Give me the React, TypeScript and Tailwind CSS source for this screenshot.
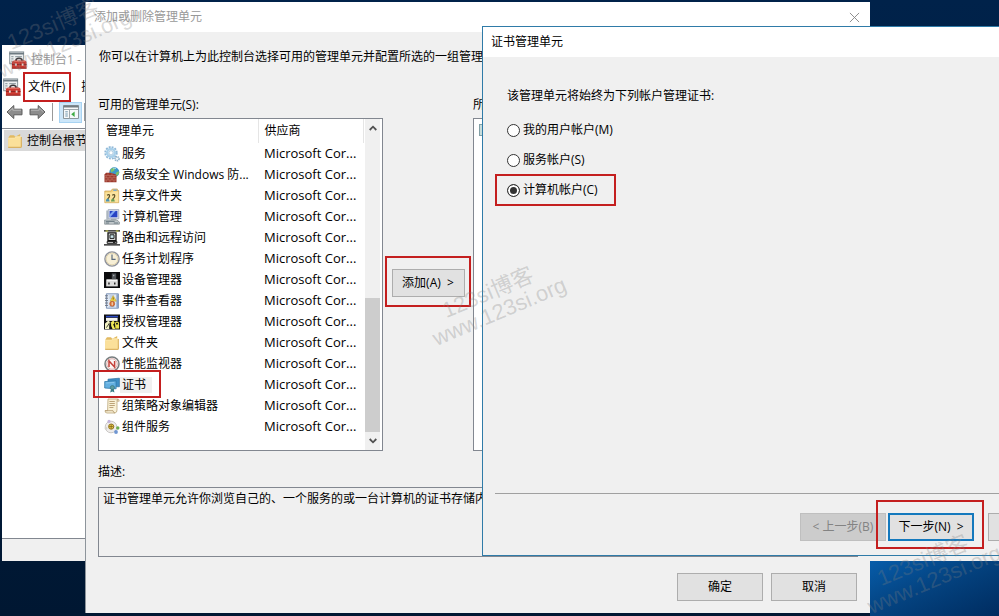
import type { ReactNode } from 'react';

function Icon({ children, className = 'size-4' }: { children: ReactNode; className?: string }) {
  return (
    <svg viewBox="0 0 16 16" className={`${className} shrink-0`} aria-hidden="true">
      {children}
    </svg>
  );
}

const FolderIcon = () => (
  <Icon>
    <path d="M1.5 4.2 3 2.2h4l1.2 1.5L13.2 1v3l1.5 8.5-1 2H1.5z" fill="#e2ba62" />
    <path d="M1.2 5.2h6.2l1.6-1.4h5.2v10.4h-13z" fill="#fbe09a" />
    <path d="M1.2 5.2h6.2l1.6-1.4h5.2" fill="none" stroke="#fff0bd" strokeWidth=".8" />
    <path d="M14.3 4v10.3H1.2" fill="none" stroke="#d8ac55" />
  </Icon>
);

const ConsoleIcon = () => (
  <Icon className="size-[18px]">
    <rect x=".6" y=".8" width="12.4" height="10.5" fill="#edf0f1" stroke="#8b979d" strokeWidth=".9" />
    <path d="M.3 2.3h13" stroke="#6d7a81" strokeWidth="1.6" />
    <path d="M2 5h2M5.5 5h6M2 7h2M2 9h1" stroke="#98a3a8" strokeWidth=".9" />
    <path d="M6.3 9V7.4q2.6-2 5.2 0V9" fill="none" stroke="#3a3436" strokeWidth="1.3" />
    <path d="M2.6 9.6 4.4 8.4h9.8l1.4 1.2v5.9h-13z" fill="#cb3a31" />
    <path d="M3.5 9.8 4.8 9h9l.8.8z" fill="#e67a6c" />
    <path d="M2.6 12h13M2.6 15.3h13" stroke="#8c2420" strokeWidth=".8" />
    <path d="M5.3 11.2h1.6V13H5.3zM11.3 11.2h1.6V13h-1.6z" fill="#e7d9d4" />
  </Icon>
);

const ServicesIcon = () => (
  <Icon>
    <circle cx="7" cy="6.8" r="5.7" fill="none" stroke="#8fb8d8" strokeWidth="2" strokeDasharray="1.9 1.08" />
    <circle cx="7" cy="6.8" r="3.9" fill="#eef6fb" stroke="#a9d0ea" strokeWidth="2.4" />
    <circle cx="7" cy="6.8" r="2.1" fill="#fff" stroke="#8fb6d2" strokeWidth=".7" />
    <circle cx="13" cy="12.7" r="2" fill="#f3f8fb" stroke="#92b4cc" strokeWidth="1.8" strokeDasharray="1.3 .5" />
  </Icon>
);

const FirewallIcon = () => (
  <Icon>
    <circle cx="10.3" cy="5.2" r="5" fill="#3b97cc" />
    <path d="M6.5 2.5Q9 .3 11 1l-.6 2.6-3.2 1.8zM11.5 6l3.3-2 .2 2.5-2.2 2.7z" fill="#7cc26a" />
    <path d="M9 2q1.6-1 3-.5" fill="none" stroke="#bfe3f2" strokeWidth=".8" />
    <path d="M.5 7.4 2 5.8h4.5l5 1.4 1 1.4v6.6H.5z" fill="#9c382d" />
    <path d="M.5 8.6h12M.5 10.8h12M.5 13h12" stroke="#cf8a7b" strokeWidth=".5" />
    <path d="M4 6.4v2.2M8 6.4v2.2M2.2 8.6v2.2M6 8.6v2.2M10 8.6v2.2M4 10.8V13M8 10.8V13M2.2 13v2M6 13v2M10 13v2" stroke="#cf8a7b" strokeWidth=".5" />
  </Icon>
);

const SharedIcon = () => (
  <Icon>
    <path d="M.8 3h6l1.6-2h5v1.5h1.3v12.2H.8z" fill="#f1cf78" stroke="#c89f50" strokeWidth=".7" />
    <path d="M1.3 4.6h6.2L9 3.4h5.2v10.8H1.3z" fill="#fbe39f" />
    <path d="M9.3 2.2h3.4" stroke="#6fa6d6" strokeWidth="1.4" />
    <path d="M3 7.2q2.4-1.4 2.6.6 0 1.2-2 3.4M8.2 7.2q2.4-1.4 2.6.6 0 1.2-2 3.4" fill="none" stroke="#5d5228" strokeWidth="1.2" />
    <path d="M1.8 13.6q.2-3.2 1.9-3.2 1.5 0 1.9 3.2z" fill="#4a93b4" />
    <path d="M7 13.6q.2-3.2 1.9-3.2 1.5 0 1.9 3.2z" fill="#6b9f57" />
  </Icon>
);

const ComputerIcon = () => (
  <Icon>
    <path d="M2.2 1.5h2v9h-2z" fill="#b6bec6" />
    <path d="M4.2.6h10.6v9.2H4.2z" fill="#dfe4ee" stroke="#8e98ad" strokeWidth=".7" />
    <path d="M5.6 1.9h7.8v6.4H5.6z" fill="#2743c4" />
    <path d="M5.6 5.6 9 1.9h2.6L6.2 8.3h-.6z" fill="#7fa6f2" />
    <path d="M.6 11h12.2l2.6 2v2.2H.6z" fill="#c2c9cc" stroke="#7d878d" strokeWidth=".7" />
    <path d="M1.8 12.4h8.8M1.8 14h3.4M9.8 14h4.4" stroke="#5f7079" strokeWidth=".9" />
    <path d="M7 9.8h5V11H7z" fill="#9ca7b0" />
  </Icon>
);

const RoutingIcon = () => (
  <Icon>
    <path d="M0 .9h16M0 14.9h16" stroke="#111" strokeWidth="1.3" />
    <path d="M1.6 1h2.6M11.8 1h2.6" stroke="#cfd23c" strokeWidth="1.2" />
    <path d="M4 2.8h8v7.8H4z" fill="#d4d6d5" stroke="#111" strokeWidth="1.3" />
    <path d="M6 4.8h4v3.6H6z" fill="#c6e4ea" stroke="#222" />
    <path d="M3.2 11.4h9.6v1.9H3.2z" fill="#dcdcdc" stroke="#151515" />
    <path d="M9 12.4h2.4" stroke="#151515" />
  </Icon>
);

const ClockIcon = () => (
  <Icon>
    <circle cx="8" cy="8" r="7.1" fill="#f7efd6" stroke="#8f929b" strokeWidth="1.4" />
    <circle cx="8" cy="8" r="5.8" fill="none" stroke="#ddcfa8" strokeWidth=".8" />
    <path d="M8 3.4v5h3.6" fill="none" stroke="#5b6b7c" strokeWidth="1.2" />
  </Icon>
);

const DeviceIcon = () => (
  <Icon>
    <path d="M0 0h16v16H0z" fill="#0b0b0d" />
    <path d="M2.2 7.4h11.6v7H2.2z" fill="#dcdcdc" />
    <path d="M7.8 1.4h4.4v6H7.8z" fill="#4e5256" />
    <path d="M9 2.8h1.4v1.4H9z" fill="#a2a6aa" />
    <path d="M4.2 10.4h1.5v2H4.2zM10 10.4h1.5v2H10z" fill="#2c2c2c" />
    <path d="M3 8.2h10" stroke="#fff" />
  </Icon>
);

const EventIcon = () => (
  <Icon>
    <path d="M2.4.8h12v14.4h-12z" fill="#dfe8f4" stroke="#7089b0" strokeWidth=".9" />
    <path d="M12.4 1.2h1.7v13.6h-1.7z" fill="#89a2c8" />
    <path d="M1 2.8h3M1 5.2h3M1 7.6h3M1 10h3M1 12.4h3" stroke="#6d7480" />
    <path d="M5.4 3h4M5.4 5h2M5.4 13.4h5" stroke="#9fb3cd" strokeWidth=".9" />
    <path d="m9.2 2.6 3.2 5.6H6z" fill="#f3d548" stroke="#b5942b" strokeWidth=".5" />
    <path d="M9.2 4.4v2.2" stroke="#594a10" strokeWidth=".8" />
    <circle cx="8.2" cy="10.8" r="2.5" fill="#dc7b3a" stroke="#b3461f" strokeWidth=".6" />
    <path d="M8.2 9.2v3.2" stroke="#fff" strokeWidth=".8" />
  </Icon>
);

const AuthorizationIcon = () => (
  <Icon>
    <path d="M0 .5h16v15H0z" fill="#0e0e10" />
    <path d="M2 1.8h12v1.6H2z" fill="#2b49c2" />
    <path d="M2 3.9h11.6v3H2z" fill="#f4f4ee" />
    <path d="M1 15V9.6l3.4-3 2.2 2.2-1.4 2v4.2z" fill="#f3f2c4" />
    <path d="m7 8.2 2.4-1.6 1.3 2.2-1.5 1.7 2 4.5H8.6l-1.4-3z" fill="#efe95a" />
    <path d="m2.4 13.6 3.4-5" stroke="#1d1d12" strokeWidth=".8" />
    <circle cx="13" cy="9.8" r="1.6" fill="none" stroke="#e4dd47" strokeWidth="1.2" />
    <path d="M11.3 10.8h3.8v3.8h-3.8z" fill="#e9e14a" />
  </Icon>
);

const PerformanceIcon = () => (
  <Icon>
    <circle cx="8" cy="8" r="7" fill="#fff" stroke="#777d7e" strokeWidth="1.5" />
    <circle cx="8" cy="8" r="5.3" fill="#fbf6f4" stroke="#c98d88" strokeWidth=".7" />
    <path d="M5 11V5l5.6 6V5" fill="none" stroke="#c4423b" strokeWidth="1.5" />
  </Icon>
);

const CertificateIcon = () => (
  <Icon>
    <path d="m4 2.2 11.4-1v8.6L4 9.4z" fill="#3f8fc6" stroke="#2b6f9f" strokeWidth=".7" />
    <path d="m.7 4.6 11.4-.8v8L.7 11z" fill="#63afe0" stroke="#2f78a8" strokeWidth=".8" />
    <path d="m2.2 6 8-.5" stroke="#8fcaee" strokeWidth=".9" />
    <circle cx="8.4" cy="10.6" r="2.1" fill="#5b9ba0" stroke="#2f7078" strokeWidth=".6" />
    <path d="m7 12-.8 3.6 2.2-1.2 2 1.2L9.8 12z" fill="#3a7f86" />
  </Icon>
);

const PolicyIcon = () => (
  <Icon>
    <path d="M4 1h9.4q1.8 0 1.8 2.2H13v8.8q0 2.6-2 3H3q-2 0-2-2.3h2.6z" fill="#f9f1d6" stroke="#baa478" strokeWidth=".8" />
    <path d="M1 12.7h8q.3 2 2 2.3M13 3q0-1.8 1.2-1.8" fill="none" stroke="#b0956a" strokeWidth=".8" />
    <path d="M5.4 3.5h5.4M5.4 5.5h5.4M5.4 7.5h5.4M5.4 9.5h4" stroke="#b59b6e" strokeWidth=".9" />
  </Icon>
);

const ComponentIcon = () => (
  <Icon>
    <circle cx="7" cy="8" r="5.8" fill="#eeecea" stroke="#c6c4c2" strokeWidth=".9" />
    <circle cx="7.2" cy="7.6" r="2.6" fill="#f0cf45" stroke="#8f7325" />
    <path d="M7.2 5.4v4.4M5 7.6h4.4" stroke="#7d6420" strokeWidth=".8" />
    <circle cx="5" cy="2.4" r="1.6" fill="#c3b3dc" />
    <circle cx="2" cy="9.4" r="1.3" fill="#d6d3cc" />
    <circle cx="13.8" cy="9" r="1.7" fill="#6cae4e" />
    <circle cx="12" cy="13" r="1.9" fill="#6f96d2" />
  </Icon>
);

const snapIns: { name: string; icon: () => ReactNode; selected?: boolean }[] = [
  { name: '服务', icon: ServicesIcon },
  { name: '高级安全 Windows 防...', icon: FirewallIcon },
  { name: '共享文件夹', icon: SharedIcon },
  { name: '计算机管理', icon: ComputerIcon },
  { name: '路由和远程访问', icon: RoutingIcon },
  { name: '任务计划程序', icon: ClockIcon },
  { name: '设备管理器', icon: DeviceIcon },
  { name: '事件查看器', icon: EventIcon },
  { name: '授权管理器', icon: AuthorizationIcon },
  { name: '文件夹', icon: FolderIcon },
  { name: '性能监视器', icon: PerformanceIcon },
  { name: '证书', icon: CertificateIcon, selected: true },
  { name: '组策略对象编辑器', icon: PolicyIcon },
  { name: '组件服务', icon: ComponentIcon },
];

function Arrow({ flip = false }: { flip?: boolean }) {
  return (
    <Icon className={flip ? 'h-4 w-[17px] -scale-x-100' : 'h-4 w-[17px]'}>
      <path d="M.5 8 7.3 1.5v3.7h8.2v5.6H7.3v3.7z" fill="#8d8d8d" stroke="#5d5d5d" />
      <path d="M2 8 6.3 4v2.2h8.2" fill="none" stroke="#b9b9b9" />
    </Icon>
  );
}

function ConsoleWindow() {
  return (
    <section aria-label="控制台1" className="absolute top-[45px] -right-10 left-[2px] flex h-[516px] flex-col bg-white">
      <header className="flex h-7 shrink-0 items-center gap-1 pt-px pl-[7px] text-[#999]">
        <ConsoleIcon />
        <span>控制台1 -</span>
      </header>
      <nav className="flex h-7 shrink-0 items-center pl-px">
        <ConsoleIcon />
        <button type="button" className="ml-[7px]">文件(F)</button>
        <button type="button" className="ml-4">操作(A)</button>
      </nav>
      <div className="flex h-[22px] shrink-0 items-center gap-[6px] pl-1">
        <button type="button" aria-label="后退"><Arrow /></button>
        <button type="button" aria-label="前进"><Arrow flip /></button>
        <span className="h-[18px] w-px bg-[#999]" />
        <div className="flex items-center gap-[2px]">
          <button type="button" aria-label="显示控制台树" className="flex h-[21px] w-[23px] items-center justify-center border border-[#a8d3f2] bg-[#cce6f9]">
            <Icon>
              <path d="M.5 1.5h15v13H.5z" fill="#f7f9fa" stroke="#8b969c" />
              <path d="M.5 2.5h15" stroke="#727c82" strokeWidth="2" />
              <path d="M1 5.5h14M6.5 6v8.5" stroke="#a0a8ac" />
              <path d="M2.3 7.8h2.5M2.3 10h2.5M2.3 12h2.5" stroke="#6f97ae" />
              <path d="m8.2 10.3 3.4-2.8V13z" fill="#3eab43" />
            </Icon>
          </button>
          <span className="h-[18px] w-px bg-[#999]" />
        </div>
      </div>
      <div className="mt-[5px] min-h-0 grow border-y border-[#828790] bg-white px-[2px] pt-px">
        <div className="flex h-[21px] items-center gap-1 bg-[#d9d9d9] pl-[3px]">
          <FolderIcon />
          <span>控制台根节点</span>
        </div>
      </div>
      <footer className="h-[22px] shrink-0 bg-[#f0f0f0]" />
    </section>
  );
}

function SnapInList() {
  return (
    <div className="flex h-[333px] w-[285px] shrink-0 border border-[#828790] bg-white">
      <table className="w-[265px] table-fixed border-collapse self-start text-left">
        <thead>
          <tr className="h-6">
            <th className="w-[159px] border-r border-[#e5e5e5] p-0 pl-[7px] font-normal">管理单元</th>
            <th className="border-r border-[#e5e5e5] p-0 pl-[6px] font-normal">供应商</th>
          </tr>
        </thead>
        <tbody>
          {snapIns.map(({ name, icon: Glyph, selected }) => (
            <tr key={name} className="h-[21px]">
              <td className="p-0 pl-[5px]">
                <div className="flex items-center whitespace-nowrap">
                  <Glyph />
                  <span className={selected ? 'bg-[#f0f0f0] pr-[6px] pl-[2px]' : 'pl-[2px]'}>{name}</span>
                </div>
              </td>
              <td className="p-0 pl-[6px] text-[13px] whitespace-nowrap">Microsoft Cor...</td>
            </tr>
          ))}
        </tbody>
      </table>
      <div className="ml-px flex w-[15px] flex-col bg-[#f0f0f0]">
        <button type="button" aria-label="向上滚动" className="flex h-[18px] items-center justify-center">
          <svg viewBox="0 0 8 6" className="h-[6px] w-2"><path d="m.7 5 3.3-3.3L7.3 5" fill="none" stroke="#505050" strokeWidth="1.8" /></svg>
        </button>
        <div className="grow" />
        <div className="h-[134px] bg-[#cdcdcd]" />
        <button type="button" aria-label="向下滚动" className="flex h-[18px] items-center justify-center">
          <svg viewBox="0 0 8 6" className="h-[6px] w-2"><path d="M.7 1 4 4.3 7.3 1" fill="none" stroke="#505050" strokeWidth="1.8" /></svg>
        </button>
      </div>
    </div>
  );
}

function SnapInDialog() {
  return (
    <section aria-label="添加或删除管理单元" className="absolute top-[2px] left-[85px] w-[785px] border-l border-[#8d949b] bg-[#f0f0f0]">
      <header className="flex h-[30px] items-center justify-between bg-white pr-[10px] pl-2 text-[#999]">
        <span>添加或删除管理单元</span>
        <button type="button" aria-label="关闭">
          <svg viewBox="0 0 12 12" className="size-[11px]"><path d="m1 1 10 10M11 1 1 11" stroke="#858585" /></svg>
        </button>
      </header>
      <div className="flex flex-col px-3 pt-[15px] pb-3">
        <p className="pl-px leading-5 whitespace-nowrap">
          你可以在计算机上为此控制台选择可用的管理单元并配置所选的一组管理单元。
        </p>
        <div className="mt-[30px] flex">
          <div className="flex shrink-0 flex-col">
            <span className="h-[21px] leading-4">可用的管理单元(S):</span>
            <SnapInList />
          </div>
          <div className="flex w-[90px] shrink-0 justify-center pt-[172px]">
            <button type="button" className="h-7 w-[73px] border border-[#adadad] bg-[#e1e1e1]">添加(A) &nbsp;&gt;</button>
          </div>
          <div className="flex grow flex-col">
            <span className="h-[21px] leading-4">所选管理单元(E):</span>
            <div className="h-[333px] border border-[#828790] bg-white p-[5px]">
              <div className="h-3 w-4 border border-[#819fa5] bg-[#c7dcdb]" />
            </div>
          </div>
        </div>
        <span className="mt-[13px] leading-4">描述:</span>
        <div className="mt-[7px] h-[70px] border border-[#828790] px-1 pt-[3px] leading-4 whitespace-nowrap">
          证书管理单元允许你浏览自己的、一个服务的或一台计算机的证书存储内容。
        </div>
        <div className="mt-4 flex justify-end gap-2 pr-px">
          <button type="button" className="h-7 w-[86px] border border-[#adadad] bg-[#e1e1e1]">确定</button>
          <button type="button" className="h-7 w-[86px] border border-[#adadad] bg-[#e1e1e1]">取消</button>
        </div>
      </div>
    </section>
  );
}

const accounts = ['我的用户帐户(M)', '服务帐户(S)', '计算机帐户(C)'];

function CertificateDialog() {
  return (
    <section aria-label="证书管理单元" className="absolute top-[26px] -right-[86px] left-[482px] flex h-[530px] flex-col border border-[#2f7ba8] bg-[#f0f0f0]">
      <header className="flex h-[30px] shrink-0 items-center bg-white pl-2">证书管理单元</header>
      <fieldset className="flex grow flex-col pt-[29px] pl-6">
        <legend className="sr-only">帐户</legend>
        <p className="leading-5">该管理单元将始终为下列帐户管理证书:</p>
        <div className="mt-[9px] flex flex-col">
          {accounts.map((label, i) => (
            <label key={label} className="flex h-[30px] items-center gap-[3px]">
              <input
                type="radio"
                name="account"
                defaultChecked={i === 2}
                className="size-[13px] appearance-none rounded-full border border-[#333] bg-white checked:bg-[#333] checked:shadow-[inset_0_0_0_2px_white]"
              />
              {label}
            </label>
          ))}
        </div>
      </fieldset>
      <footer className="ml-3 flex h-[62px] shrink-0 items-start justify-end border-t border-[#a0a0a0] pt-[19px] pr-[10px]">
        <button type="button" disabled className="h-7 w-[86px] border border-[#bfbfbf] bg-[#ccc] text-[#838383]">&lt; 上一步(B)</button>
        <button type="button" className="ml-[2px] h-7 w-[86px] border-2 border-[#1479bd] bg-[#e1e1e1]">下一步(N) &nbsp;&gt;</button>
        <button type="button" className="ml-[14px] h-7 w-[86px] border border-[#adadad] bg-[#e1e1e1]">取消</button>
      </footer>
    </section>
  );
}

function Watermark({ className }: { className: string }) {
  return (
    <div className={`pointer-events-none absolute origin-bottom-left -rotate-[23deg] font-['Liberation_Sans','Noto_Sans_CJK_SC',sans-serif] text-[22px] leading-[22px] whitespace-nowrap text-[#808080]/30 ${className}`}>
      <div className="pl-5">123si博客</div>
      <div>www.123si.org</div>
    </div>
  );
}

export default function App() {
  return (
    <main className="relative h-screen min-h-[616px] w-full overflow-hidden bg-linear-to-b from-[#00224a] to-[#001732] font-['Open_Sans','Noto_Sans_CJK_SC',sans-serif] text-xs text-black">
      <div className="absolute top-[556px] right-0 bottom-0 left-[870px] bg-linear-to-br from-[#075fae] via-[#04427f] to-[#002c60]" />
      <ConsoleWindow />
      <SnapInDialog />
      <CertificateDialog />
      <div className="pointer-events-none absolute top-[72px] left-[23px] h-[30px] w-12 border-2 border-[#c41f1f]" />
      <div className="pointer-events-none absolute top-[370px] left-[93px] h-7 w-[68px] border-2 border-[#c41f1f]" />
      <div className="pointer-events-none absolute top-[256px] left-[385px] h-[51px] w-[86px] border-2 border-[#c41f1f]" />
      <div className="pointer-events-none absolute top-[174px] left-[495px] h-8 w-[121px] border-2 border-[#c41f1f]" />
      <div className="pointer-events-none absolute top-[500px] left-[876px] h-[49px] w-[108px] border-2 border-[#c41f1f]" />
      <Watermark className="top-[306px] left-[438px]" />
      <Watermark className="top-[38px] left-[3px]" />
      <Watermark className="top-[574px] left-[873px]" />
    </main>
  );
}
